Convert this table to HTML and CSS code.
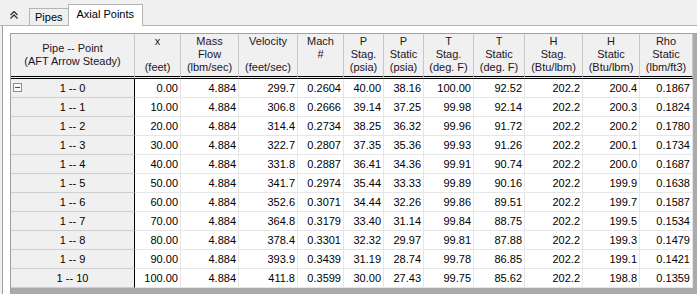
FILE: index.html
```html
<!DOCTYPE html>
<html lang="en">

<head>
    <meta charset="utf-8">
    <title>Axial Points</title>
    <link rel="stylesheet" href="styles.css">
</head>

<body>
    <div class="tabstrip">
        <span class="collapse">
            <svg width="8" height="8" viewBox="0 0 8 8">
                <polyline points="0.5,4 4,0.5 7.5,4" fill="none" stroke="#333" stroke-width="1.3" />
                <polyline points="0.5,7.5 4,4 7.5,7.5" fill="none" stroke="#333" stroke-width="1.3" />
            </svg>
        </span>
        <div class="tab">Pipes</div>
        <div class="tab active">Axial Points</div>
    </div>
    <div class="panel">
        <div class="grid">
            <table class="results">
                <colgroup>
                    <col style="width: 124px">
                    <col style="width: 46px">
                    <col style="width: 58px">
                    <col style="width: 59px">
                    <col style="width: 46px">
                    <col style="width: 40px">
                    <col style="width: 40px">
                    <col style="width: 50px">
                    <col style="width: 51px">
                    <col style="width: 58px">
                    <col style="width: 57px">
                    <col style="width: 53px">
                </colgroup>
                <thead>
                    <tr>
                        <th class="name-col">Pipe -- Point<br>(AFT Arrow Steady)</th>
                        <th>x<br>&nbsp;<br>(feet)</th>
                        <th>Mass<br>Flow<br>(lbm/sec)</th>
                        <th>Velocity<br>&nbsp;<br>(feet/sec)</th>
                        <th>Mach<br>#<br>&nbsp;</th>
                        <th>P<br>Stag.<br>(psia)</th>
                        <th>P<br>Static<br>(psia)</th>
                        <th>T<br>Stag.<br>(deg. F)</th>
                        <th>T<br>Static<br>(deg. F)</th>
                        <th>H<br>Stag.<br>(Btu/lbm)</th>
                        <th>H<br>Static<br>(Btu/lbm)</th>
                        <th>Rho<br>Static<br>(lbm/ft3)</th>
                    </tr>
                </thead>
                <tbody id="rows"></tbody>
            </table>
        </div>
    </div>
    <script>
        const data = [
            ["1 -- 0", "0.00", "4.884", "299.7", "0.2604", "40.00", "38.16", "100.00", "92.52", "202.2", "200.4", "0.1867"],
            ["1 -- 1", "10.00", "4.884", "306.8", "0.2666", "39.14", "37.25", "99.98", "92.14", "202.2", "200.3", "0.1824"],
            ["1 -- 2", "20.00", "4.884", "314.4", "0.2734", "38.25", "36.32", "99.96", "91.72", "202.2", "200.2", "0.1780"],
            ["1 -- 3", "30.00", "4.884", "322.7", "0.2807", "37.35", "35.36", "99.93", "91.26", "202.2", "200.1", "0.1734"],
            ["1 -- 4", "40.00", "4.884", "331.8", "0.2887", "36.41", "34.36", "99.91", "90.74", "202.2", "200.0", "0.1687"],
            ["1 -- 5", "50.00", "4.884", "341.7", "0.2974", "35.44", "33.33", "99.89", "90.16", "202.2", "199.9", "0.1638"],
            ["1 -- 6", "60.00", "4.884", "352.6", "0.3071", "34.44", "32.26", "99.86", "89.51", "202.2", "199.7", "0.1587"],
            ["1 -- 7", "70.00", "4.884", "364.8", "0.3179", "33.40", "31.14", "99.84", "88.75", "202.2", "199.5", "0.1534"],
            ["1 -- 8", "80.00", "4.884", "378.4", "0.3301", "32.32", "29.97", "99.81", "87.88", "202.2", "199.3", "0.1479"],
            ["1 -- 9", "90.00", "4.884", "393.9", "0.3439", "31.19", "28.74", "99.78", "86.85", "202.2", "199.1", "0.1421"],
            ["1 -- 10", "100.00", "4.884", "411.8", "0.3599", "30.00", "27.43", "99.75", "85.62", "202.2", "198.8", "0.1359"]
        ];

        const body = document.getElementById("rows");
        data.forEach((row, i) => {
            const tr = document.createElement("tr");
            row.forEach((val, j) => {
                const td = document.createElement("td");
                td.textContent = val;
                if (j === 0) {
                    td.className = "name-cell";
                    if (i === 0) {
                        const box = document.createElement("span");
                        box.className = "expander";
                        td.appendChild(box);
                    }
                }
                tr.appendChild(td);
            });
            body.appendChild(tr);
        });
    </script>
</body>

</html>
```

FILE: styles.css
```css
body,
html {
    margin: 0;
    padding: 0;
    height: 100%;
    overflow: hidden;
}

body {
    display: flex;
    flex-direction: column;
    background-color: #f0f0f0;
    font-family: "Liberation Sans", Arial, sans-serif;
    font-size: 11px;
    color: #000;
}

.tabstrip {
    display: flex;
    flex-shrink: 0;
    align-items: flex-end;
    height: 25px;
    border-bottom: 1px solid #b4b4b4;
    box-sizing: content-box;
}

.collapse {
    display: flex;
    align-self: flex-start;
    margin: 11px 11px 0 10px;
}

.tab {
    box-sizing: border-box;
    height: 17px;
    line-height: 13px;
    padding: 2px 5px 0;
    border: 1px solid #b4b4b4;
    border-bottom: none;
    border-right: none;
    background-color: #f0f0f0;
    white-space: nowrap;
}

.tab.active {
    height: 22px;
    margin-bottom: -1px;
    padding: 3px 8px 0;
    border-right: 1px solid #b4b4b4;
    background-color: #fff;
}

.panel {
    display: flex;
    flex-direction: column;
    flex: 1;
    min-height: 0;
    margin-left: 2px;
    padding: 7px 0 0 7px;
    background-color: #fff;
    border-left: 1px solid #a0a0a0;
}

.grid {
    flex: 1;
    min-height: 0;
    overflow: hidden;
    background-color: #ababab;
    border-top: 1px solid #a0a0a0;
    border-left: 1px solid #a0a0a0;
}

.results {
    table-layout: fixed;
    width: 682px;
    border-collapse: separate;
    border-spacing: 0;
}

.results th,
.results td {
    box-sizing: border-box;
    white-space: nowrap;
    overflow: hidden;
}

.results th {
    background-color: #f0f0f0;
    font-weight: normal;
    color: #1e1428;
    vertical-align: top;
    text-align: center;
    line-height: 13px;
    padding: 1px 0 2px;
    border-right: 1px solid #c8c8c8;
    border-bottom: 3px double #000;
}

.results th.name-col {
    vertical-align: middle;
}

.results td {
    background-color: #fff;
    text-align: right;
    line-height: 18px;
    padding: 0 2px 0 0;
    border-right: 1px solid #e6e6e6;
    border-bottom: 1px solid #e6e6e6;
}

.results td.name-cell {
    position: relative;
    background-color: #f0f0f0;
    text-align: center;
    padding: 0;
    border-right: 1px solid #000;
    border-bottom: 1px solid #cfcfcf;
}

.expander {
    position: absolute;
    left: 2px;
    top: 4px;
    width: 9px;
    height: 9px;
    box-sizing: border-box;
    border: 1px solid #8e8e8e;
    background-color: #fafafa;
}

.expander::after {
    content: "";
    position: absolute;
    left: 1px;
    top: 3px;
    width: 5px;
    height: 1px;
    background-color: #3c4e6e;
}
```
